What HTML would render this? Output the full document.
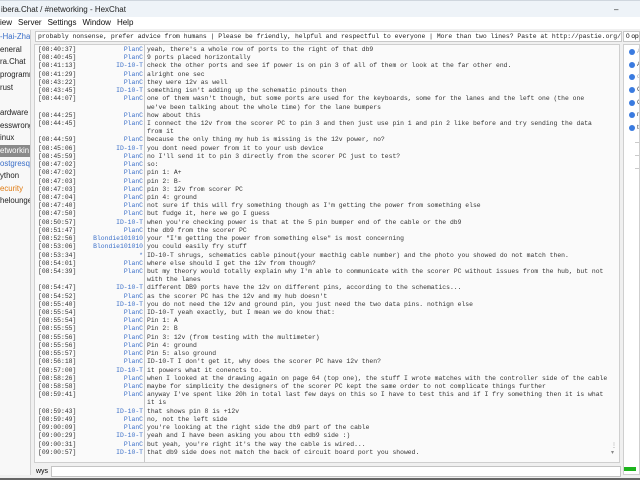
<!DOCTYPE html>
<html><head><meta charset="utf-8"><style>
*{margin:0;padding:0;box-sizing:border-box}
body{width:640px;height:480px;overflow:hidden;background:#f0f0f0;font-family:"Liberation Sans",sans-serif;position:relative}
.abs{position:absolute}
#title{left:0;top:0;width:640px;height:17px;background:#eef3f8;font-size:8px;color:#222;line-height:17px;padding-left:1px;border-top:1px solid #cfd6de}
#menu{left:0;top:17px;width:640px;height:12px;background:#fff;font-size:8px;line-height:12px;color:#111}
#menu span{margin-right:6px}
#left{left:0;top:30px;width:31px;height:445px;background:#f8f8f8;border-right:1px solid #d0d0d0;font-size:7.8px;overflow:hidden}
#left div{position:absolute;left:0;white-space:nowrap;height:12px;line-height:12px;width:31px;color:#222}
#topic{left:35px;top:31px;width:587px;height:11px;background:#fff;border:1px solid #c8c8c8;font-family:"Liberation Mono",monospace;font-size:6.4px;line-height:9px;padding-left:2px;white-space:nowrap;overflow:hidden;color:#222}
#chat{left:34px;top:44px;width:586px;height:419px;background:#fafafa;border:1px solid #cfcfcf;overflow:hidden}
#sep{left:144px;top:45px;width:1px;height:417px;background:#c8c8c8}
.l{position:absolute;left:3px;height:8.22px;font-family:"Liberation Mono",monospace;font-size:6.4px;line-height:8.22px;white-space:pre;color:#333}
.t{position:absolute;left:0}
.n{position:absolute;right:-105px;width:60px;text-align:right;color:#3b6fc8}
.m{position:absolute;left:109px}
#input{left:51px;top:466px;width:570px;height:11px;background:#fff;border:1px solid #c4c4c4}
#ulist{left:623px;top:44px;width:17px;height:431px;background:#fff;border:1px solid #cfcfcf;overflow:hidden;font-size:6.5px}
.dot{position:absolute;left:5px;width:6px;height:6px;border-radius:50%;background:#3a7be0}
.u{position:absolute;left:13px;color:#444;line-height:8px}
</style></head><body>
<div id="title" class="abs">ibera.Chat / #networking - HexChat<span style="position:absolute;left:614px;top:0">–</span></div>
<div id="menu" class="abs"><span>iew</span><span>Server</span><span>Settings</span><span>Window</span><span>Help</span></div>
<div id="left" class="abs">
<div style="top:1px;color:#3b6fc8">-Hai-Zha</div>
<div style="top:14px">eneral</div>
<div style="top:26px">ra.Chat</div>
<div style="top:39px">programm</div>
<div style="top:52px">rust</div>
<div style="top:77px">ardware</div>
<div style="top:90px">esswrong</div>
<div style="top:102px">inux</div>
<div style="top:115px;background:#8a8a8a;color:#fff">etworkin</div>
<div style="top:128px;color:#3b6fc8">ostgresq</div>
<div style="top:140px">ython</div>
<div style="top:153px;color:#e07a10">ecurity</div>
<div style="top:165px">helounge</div>
</div>
<div id="topic" class="abs">probably nonsense, prefer advice from humans | Please be friendly, helpful and respectful to everyone | More than two lines? Paste at http://pastie.org/</div>
<div class="abs" style="left:623px;top:31px;width:17px;height:11px;background:#fff;border:1px solid #c8c8c8;font-size:6.5px;line-height:9px;padding-left:2px;overflow:hidden;white-space:nowrap">0 op</div>
<div id="chat" class="abs">
<div id="lines"></div>
<div class="abs" style="right:2px;bottom:6px;font-size:6px;color:#888">⋮<br>▾</div>
</div>
<div id="sep" class="abs"></div>
<div class="abs" style="left:36px;top:466px;font-size:7px;line-height:11px">wys</div>
<div id="input" class="abs"></div>
<div id="ulist" class="abs">
<div class="dot" style="top:4px"></div><div class="dot" style="top:17px"></div><div class="dot" style="top:29px"></div><div class="dot" style="top:42px"></div><div class="dot" style="top:55px"></div><div class="dot" style="top:67px"></div><div class="dot" style="top:80px"></div>
<div class="u" style="top:3px;color:#aaa">A</div><div class="u" style="top:16px">A</div><div class="u" style="top:28px;color:#aaa">c</div><div class="u" style="top:41px">C</div><div class="u" style="top:54px">C</div><div class="u" style="top:66px">m</div><div class="u" style="top:79px">t</div>
<div class="u" style="top:94px;left:11px;color:#888">—</div><div class="u" style="top:107px;left:11px;color:#888">—</div><div class="u" style="top:120px;left:11px;color:#888">—</div>
</div>
<div class="abs" style="left:624px;top:467px;width:12px;height:4px;background:#1db41d"></div>
<div class="abs" style="left:0;top:478px;width:640px;height:2px;background:#666"></div>
<script>
var L=[
["08:40:37","PlanC","yeah, there's a whole row of ports to the right of that db9"],
["08:40:45","PlanC","9 ports placed horizontally"],
["08:41:13","ID-10-T","check the other ports and see if power is on pin 3 of all of them or look at the far other end."],
["08:41:29","PlanC","alright one sec"],
["08:43:22","PlanC","they were 12v as well"],
["08:43:45","ID-10-T","something isn't adding up the schematic pinouts then"],
["08:44:07","PlanC","one of them wasn't though, but some ports are used for the keyboards, some for the lanes and the left one (the one"],
["","","we've been talking about the whole time) for the lane bumpers"],
["08:44:25","PlanC","how about this"],
["08:44:45","PlanC","I connect the 12v from the scorer PC to pin 3 and then just use pin 1 and pin 2 like before and try sending the data"],
["","","from it"],
["08:44:59","PlanC","because the only thing my hub is missing is the 12v power, no?"],
["08:45:06","ID-10-T","you dont need power from it to your usb device"],
["08:45:59","PlanC","no I'll send it to pin 3 directly from the scorer PC just to test?"],
["08:47:02","PlanC","so:"],
["08:47:02","PlanC","pin 1: A+"],
["08:47:03","PlanC","pin 2: B-"],
["08:47:03","PlanC","pin 3: 12v from scorer PC"],
["08:47:04","PlanC","pin 4: ground"],
["08:47:40","PlanC","not sure if this will fry something though as I'm getting the power from something else"],
["08:47:50","PlanC","but fudge it, here we go I guess"],
["08:50:57","ID-10-T","when you're checking power is that at the 5 pin bumper end of the cable or the db9"],
["08:51:47","PlanC","the db9 from the scorer PC"],
["08:52:56","Blondie101010","your \"I'm getting the power from something else\" is most concerning"],
["08:53:06","Blondie101010","you could easily fry stuff"],
["08:53:34","*","ID-10-T shrugs, schematics cable pinout(your macthig cable number) and the photo you showed do not match then."],
["08:54:01","PlanC","where else should I get the 12v from though?"],
["08:54:39","PlanC","but my theory would totally explain why I'm able to communicate with the scorer PC without issues from the hub, but not"],
["","","with the lanes"],
["08:54:47","ID-10-T","different DB9 ports have the 12v on different pins, according to the schematics..."],
["08:54:52","PlanC","as the scorer PC has the 12v and my hub doesn't"],
["08:55:40","ID-10-T","you do not need the 12v and ground pin, you just need the two data pins. nothign else"],
["08:55:54","PlanC","ID-10-T yeah exactly, but I mean we do know that:"],
["08:55:54","PlanC","Pin 1: A"],
["08:55:55","PlanC","Pin 2: B"],
["08:55:56","PlanC","Pin 3: 12v (from testing with the multimeter)"],
["08:55:56","PlanC","Pin 4: ground"],
["08:55:57","PlanC","Pin 5: also ground"],
["08:56:18","PlanC","ID-10-T I don't get it, why does the scorer PC have 12v then?"],
["08:57:00","ID-10-T","it powers what it conencts to."],
["08:58:26","PlanC","when I looked at the drawing again on page 64 (top one), the stuff I wrote matches with the controller side of the cable"],
["08:58:58","PlanC","maybe for simplicity the designers of the scorer PC kept the same order to not complicate things further"],
["08:59:41","PlanC","anyway I've spent like 20h in total last few days on this so I have to test this and if I fry something then it is what"],
["","","it is"],
["08:59:43","ID-10-T","that shows pin 8 is +12v"],
["08:59:49","PlanC","no, not the left side"],
["09:00:09","PlanC","you're looking at the right side the db9 part of the cable"],
["09:00:29","ID-10-T","yeah and I have been asking you abou tth edb9 side :)"],
["09:00:31","PlanC","but yeah, you're right it's the way the cable is wired..."],
["09:00:57","ID-10-T","that db9 side does not match the back of circuit board port you showed."]];
var h="";
function esc(s){return s.replace(/&/g,"&amp;").replace(/</g,"&lt;").replace(/"/g,"&quot;");}
for(var i=0;i<L.length;i++){var r=L[i];var y=(1+i*8.22).toFixed(2);
h+='<div class="l" style="top:'+y+'px"><span class="t">'+(r[0]?'['+r[0]+']':'')+'</span><span class="n">'+esc(r[1])+'</span><span class="m">'+esc(r[2])+'</span></div>';}
document.getElementById("lines").innerHTML=h;
</script>
</body></html>
